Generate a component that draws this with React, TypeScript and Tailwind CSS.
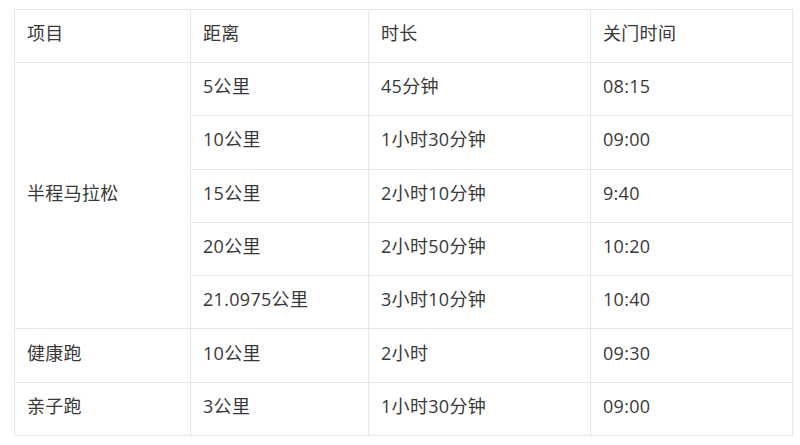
import React from 'react';

type Row = { item?: string; span?: number; distance: string; duration: string; close: string };

const rows: Row[] = [
    { item: '半程马拉松', span: 5, distance: '5公里', duration: '45分钟', close: '08:15' },
    { distance: '10公里', duration: '1小时30分钟', close: '09:00' },
    { distance: '15公里', duration: '2小时10分钟', close: '9:40' },
    { distance: '20公里', duration: '2小时50分钟', close: '10:20' },
    { distance: '21.0975公里', duration: '3小时10分钟', close: '10:40' },
    { item: '健康跑', span: 1, distance: '10公里', duration: '2小时', close: '09:30' },
    { item: '亲子跑', span: 1, distance: '3公里', duration: '1小时30分钟', close: '09:00' },
];

const cell = 'border border-[#e6e6e6] pl-[12px] pb-[5px] align-middle text-left font-normal';

export default function App() {
    return (
        <div className="w-[800px] h-[445px] bg-white pt-[9px] pl-[14px]">
            <table
                className="border-collapse table-fixed w-[778px] text-[18px] text-[#383838] tracking-[0.3px]"
                style={{ fontFamily: '"Open Sans", "Noto Sans CJK SC", sans-serif' }}
            >
                <colgroup>
                    <col className="w-[176px]" />
                    <col className="w-[178px]" />
                    <col className="w-[222px]" />
                    <col className="w-[202px]" />
                </colgroup>
                <thead>
                    <tr className="h-[53px]">
                        <th className={cell}>项目</th>
                        <th className={cell}>距离</th>
                        <th className={cell}>时长</th>
                        <th className={cell}>关门时间</th>
                    </tr>
                </thead>
                <tbody>
                    {rows.map((r, i) => (
                        <tr key={i} className="h-[53.3px]">
                            {r.item && (
                                <td rowSpan={r.span} className={cell}>
                                    {r.item}
                                </td>
                            )}
                            <td className={cell}>{r.distance}</td>
                            <td className={cell}>{r.duration}</td>
                            <td className={cell}>{r.close}</td>
                        </tr>
                    ))}
                </tbody>
            </table>
        </div>
    );
}
